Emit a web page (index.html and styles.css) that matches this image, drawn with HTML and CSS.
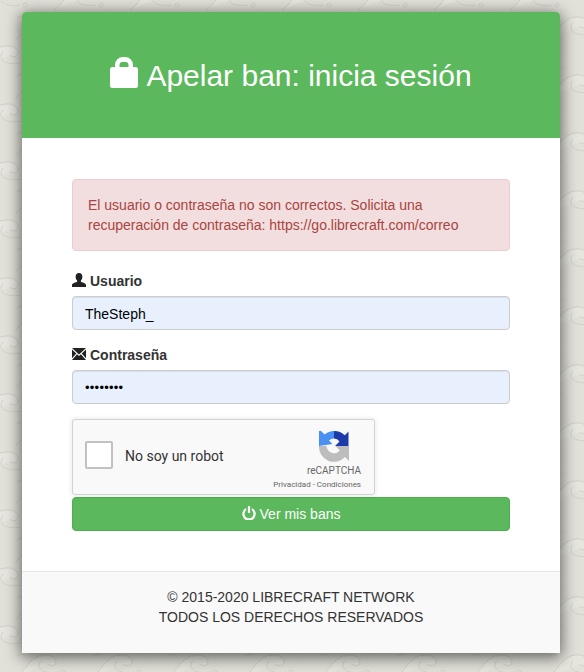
FILE: index.html
```html
<!DOCTYPE html>
<html lang="es">
<head>
<meta charset="utf-8">
<title>Apelar ban</title>
<link rel="stylesheet" href="styles.css">
</head>
<body>
<main class="panel">
  <header class="panel-head">
    <h1 class="title">
      <svg class="lock" viewBox="0 0 28 31"><path d="M2.500 10H5V8a8 8 0 0 1 8-8h2a8 8 0 0 1 8 8v2h2.500A2.500 2.500 0 0 1 28 12.500v16a2.500 2.500 0 0 1-2.500 2.500h-23A2.500 2.500 0 0 1 0 28.500v-16A2.500 2.500 0 0 1 2.500 10zM9.500 10h9V8a3 3 0 0 0-3-3h-3a3 3 0 0 0-3 3z" fill-rule="evenodd"/></svg>
      <span>Apelar ban: inicia sesión</span>
    </h1>
  </header>
  <section class="panel-body">
    <div class="alert">El usuario o contraseña no son correctos. Solicita una recuperación de contraseña: https://go.librecraft.com/correo</div>
    <div class="field">
      <label class="label">
        <svg class="label-icon" viewBox="0 0 14 14"><path d="M7 0c2.200 0 3.400 1.500 3.400 3.700 0 1.500-.6 3-1.500 3.900v1.200c.5.400 5.100 1.500 5.100 3.200V14H0v-2c0-1.700 4.600-2.800 5.100-3.200V7.600C4.200 6.700 3.600 5.200 3.600 3.700 3.600 1.500 4.800 0 7 0z"/></svg>
        Usuario
      </label>
      <div class="input">TheSteph_</div>
    </div>
    <div class="field">
      <label class="label">
        <svg class="label-icon" viewBox="0 0 14 12"><path d="M0 0h14L7 6.400zM0 1.600l4.300 4L0 10.200zM14 1.600v8.600L9.700 5.600zM5.100 6.300 7 8l1.900-1.700L14 12H0z"/></svg>
        Contraseña
      </label>
      <div class="input dots">••••••••</div>
    </div>
    <div class="captcha">
      <span class="check"></span>
      <span class="captcha-text">No soy un robot</span>
      <div class="captcha-brand">
        <svg class="recaptcha" viewBox="0 0 32 32">
          <path fill="#4a90f2" d="M3 1l3.600 3.600A14.500 14.500 0 0 1 16 1v7.500a7.500 7.500 0 0 0-5 2l3.500 3.500L1 16V1z"/>
          <path fill="#1c3aa9" d="M16 1a15 15 0 0 1 10.800 4.300L30.500 1.500V16H17l4.500-4.500A7.500 7.500 0 0 0 16 8.500z"/>
          <path fill="#bdbdbd" d="M1 16h7.600a7.500 7.500 0 0 0 13.200 4.600L17.500 16H31v15l-4-4A15 15 0 0 1 1 16z"/>
        </svg>
        <span class="brand-name">reCAPTCHA</span>
        <span class="brand-links">Privacidad - Condiciones</span>
      </div>
    </div>
    <button class="submit" type="button">
      <svg class="power" viewBox="0 0 14 14"><path d="M5.900 0h2.200v7H5.900z"/><path d="M4.200 1.900v2.400a4.500 4.500 0 1 0 5.600 0V1.900a6.700 6.700 0 1 1-5.600 0z"/></svg>
      Ver mis bans
    </button>
  </section>
  <footer class="panel-foot">
    <div>© 2015-2020 LIBRECRAFT NETWORK</div>
    <div>TODOS LOS DERECHOS RESERVADOS</div>
  </footer>
</main>
</body>
</html>
```
FILE: styles.css
```css
* { box-sizing: border-box; }
html, body { height: 100%; }
body {
  margin: 0;
  padding: 12px 24px 0 22px;
  overflow: hidden;
  font-family: "Liberation Sans", Arial, sans-serif;
  font-size: 14px;
  line-height: 20px;
  color: #333;
  background-color: #e1e1d9;
  background-image: url("data:image/svg+xml,%3Csvg xmlns='http://www.w3.org/2000/svg' xmlns:xlink='http://www.w3.org/1999/xlink' width='76' height='58'%3E%3Cdefs%3E%3Cg id='w'%3E%3Cpath d='M6 30C14 26 20 9 33 8 41 7 46 11 46 15 46 19 40 20 38 17' fill='%23e6e6df' stroke='%23cfcfc6'/%3E%3Cpath d='M31 14C27 18 29 24 36 25 41 26 44 26 48 25' fill='none' stroke='%23d1d1c8'/%3E%3Ccircle cx='53' cy='25' r='2' fill='none' stroke='%23d1d1c8'/%3E%3Cpath d='M7 9 11 7 15 9' fill='none' stroke='%23cfcfc6'/%3E%3Cpath d='M50 8h5M60 14h6M56 30h9M18 36h6' stroke='%23d6d6cd' stroke-dasharray='1 2'/%3E%3C/g%3E%3C/defs%3E%3Cuse xlink:href='%23w'/%3E%3Cuse xlink:href='%23w' x='-38' y='29'/%3E%3Cuse xlink:href='%23w' x='38' y='29'/%3E%3Cuse xlink:href='%23w' x='-38' y='-29'/%3E%3Cuse xlink:href='%23w' x='38' y='-29'/%3E%3C/svg%3E");
  background-position: 10px 9px;
}
.panel {
  width: 538px;
  height: 641px;
  background: #fff;
  border-radius: 4px 4px 0 0;
  overflow: hidden;
  display: flex;
  flex-direction: column;
  box-shadow: 0 3px 16px 1px rgba(0, 0, 0, .6);
}
.panel-head {
  height: 126px;
  background: #5cb85c;
  color: #fff;
  display: flex;
  align-items: center;
  justify-content: center;
  flex: none;
}
.title {
  margin: 0;
  font-size: 30px;
  font-weight: 400;
  line-height: 33px;
  display: flex;
  align-items: center;
  gap: 8px;
}
.lock { width: 28px; height: 31px; fill: #fff; margin-top: -5px; }
.panel-body {
  flex: 1;
  padding: 41px 50px 0;
  display: flex;
  flex-direction: column;
}
.alert {
  height: 72px;
  padding: 15px;
  background: #f2dede;
  border: 1px solid #ebccd1;
  border-radius: 4px;
  color: #a94442;
  margin-bottom: 20px;
}
.field { margin-bottom: 15px; }
.label {
  display: flex;
  align-items: center;
  gap: 4px;
  font-weight: 700;
  margin-bottom: 5px;
}
.label-icon { width: 14px; height: 14px; fill: #222; margin-top: -3px; }
.input {
  height: 34px;
  padding: 7px 12px;
  background: #e8f0fe;
  border: 1px solid #ccc;
  border-radius: 4px;
  color: #000;
  box-shadow: inset 0 1px 1px rgba(0, 0, 0, .075);
}
.dots { font-size: 13px; letter-spacing: .25px; }
.captcha {
  position: relative;
  width: 303px;
  height: 76px;
  background: #f9f9f9;
  border: 1px solid #d3d3d3;
  border-radius: 3px;
  box-shadow: 0 0 4px 1px rgba(0, 0, 0, .08);
  display: flex;
  align-items: center;
  font-family: Roboto, "Liberation Sans", sans-serif;
  color: #333;
}
.check {
  width: 28px;
  height: 28px;
  margin-left: 12px;
  margin-bottom: 4px;
  background: #fff;
  border: 2px solid #c1c1c1;
  border-radius: 2px;
}
.captcha-text { margin-left: 12px; margin-bottom: 2px; font-size: 14px; }
.captcha-brand {
  position: absolute;
  top: 10px;
  right: 13px;
  display: flex;
  flex-direction: column;
  align-items: flex-end;
  color: #666;
}
.recaptcha { width: 32px; height: 32px; margin-right: 11px; }
.brand-name { font-size: 10px; line-height: 12px; margin-top: 3px; }
.brand-links { font-size: 8px; line-height: 10px; margin-top: 3px; }
.submit {
  height: 34px;
  margin-top: 2px;
  background: #5cb85c;
  border: 1px solid #4cae4c;
  border-radius: 4px;
  color: #fff;
  font: inherit;
  display: flex;
  align-items: center;
  justify-content: center;
  gap: 4px;
  padding: 0;
}
.power { width: 14px; height: 14px; fill: #fff; margin-top: -3px; }
.panel-foot {
  flex: none;
  height: 82px;
  padding-top: 15px;
  background: #f9f9f9;
  border-top: 1px solid #e7e7e7;
  text-align: center;
}
```
